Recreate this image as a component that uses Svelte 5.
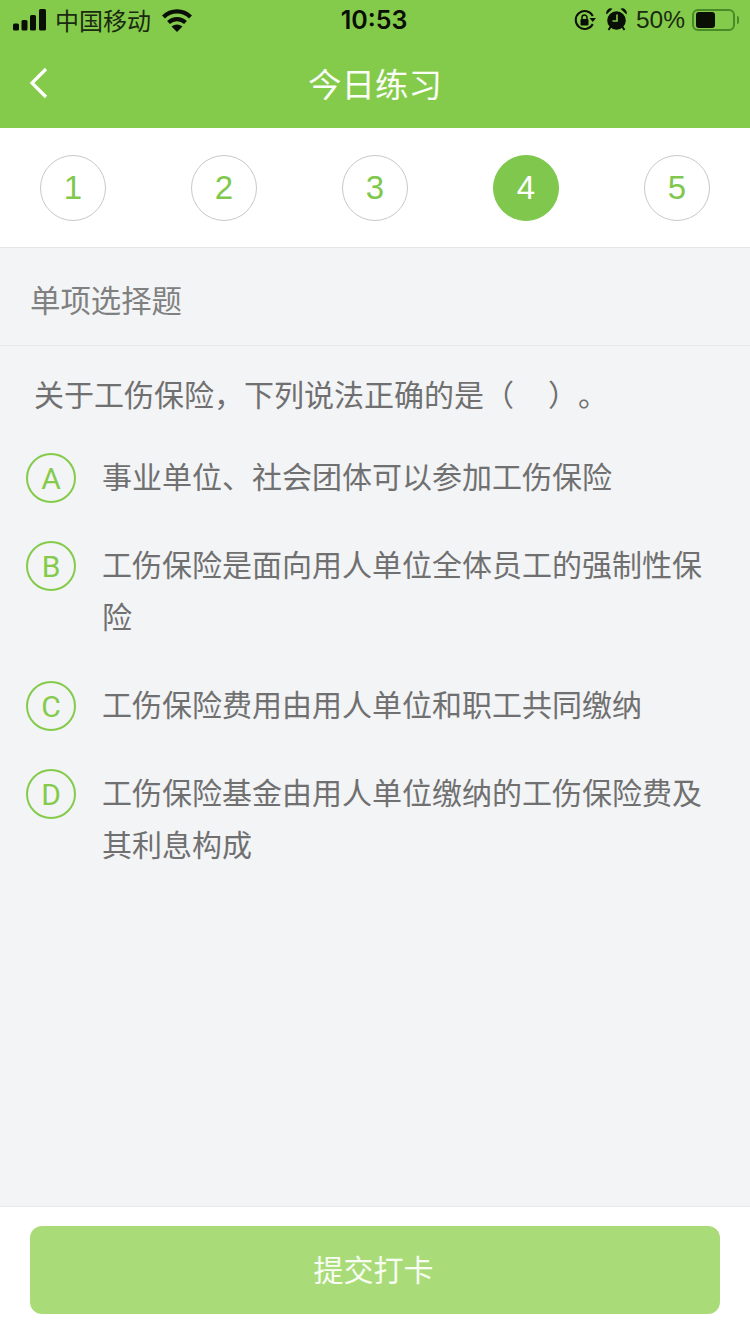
<script>
  const steps = [1, 2, 3, 4, 5];
  const options = [
    { key: 'A', text: '事业单位、社会团体可以参加工伤保险' },
    { key: 'B', text: '工伤保险是面向用人单位全体员工的强制性保险' },
    { key: 'C', text: '工伤保险费用由用人单位和职工共同缴纳' },
    { key: 'D', text: '工伤保险基金由用人单位缴纳的工伤保险费及其利息构成' }
  ];
</script>

<div class="page">
  <header class="header">
    <div class="status">
      <div class="st-left">
        <svg class="signal" width="33" height="22" viewBox="0 0 33 22">
          <rect x="0" y="14.500" width="6" height="7" rx="1.500" fill="#0a0f05"/>
          <rect x="8.500" y="11" width="6" height="10.500" rx="1.500" fill="#0a0f05"/>
          <rect x="17" y="6" width="6" height="15.500" rx="1.500" fill="#0a0f05"/>
          <rect x="26" y="0" width="7" height="21.500" rx="1.500" fill="#0a0f05"/>
        </svg>
        <span class="carrier">中国移动</span>
        <svg class="wifi" width="30" height="23" viewBox="0 0 30 23">
          <path d="M1.500 8C9 .5 21 .5 28.500 8" fill="none" stroke="#0a0f05" stroke-width="4.200"/>
          <path d="M6.500 13.500c5-4.500 12-4.500 17 0" fill="none" stroke="#0a0f05" stroke-width="4.200"/>
          <path d="M9.500 17.500c3.500-2.700 7.500-2.700 11 0L15 23z" fill="#0a0f05"/>
        </svg>
      </div>
      <span class="time">10:53</span>
      <div class="st-right">
        <svg width="22" height="22" viewBox="0 0 22 22">
          <path d="M18.800 15A9 9 0 1 1 18.800 7" fill="none" stroke="#0a0f05" stroke-width="2"/>
          <path d="M15.500 9h6.500l-3.200 4z" fill="#0a0f05"/>
          <rect x="6.500" y="10" width="8" height="6.500" rx="1" fill="#0a0f05"/>
          <path d="M8 10V8.500a2.500 2.500 0 0 1 5 0V10" fill="none" stroke="#0a0f05" stroke-width="1.500"/>
        </svg>
        <svg class="alarm" width="21" height="24" viewBox="0 0 21 24">
          <circle cx="10.500" cy="13.500" r="9.300" fill="#0a0f05"/>
          <path d="M.5 7.500A4.500 4.500 0 0 1 6.500 1.800zM20.500 7.500A4.500 4.500 0 0 0 14.500 1.800z" fill="#0a0f05"/>
          <path d="M4.500 20l-2 3M16.500 20l2 3" stroke="#0a0f05" stroke-width="2"/>
          <path d="M11 7.500v6.500H6.500" fill="none" stroke="#85cb4b" stroke-width="1.600"/>
        </svg>
        <span class="pct">50%</span>
        <div class="battery"><div class="fill"></div></div>
        <div class="nub"></div>
      </div>
    </div>
    <div class="nav">
      <svg class="back" width="20" height="32" viewBox="0 0 20 32">
        <path d="M17 2 3 16l14 14" fill="none" stroke="#fff" stroke-width="3.200"/>
      </svg>
      <h1 class="title">今日练习</h1>
    </div>
  </header>

  <nav class="steps">
    {#each steps as n}
      <div class="step" class:active={n === 4}>{n}</div>
    {/each}
  </nav>

  <div class="kind">单项选择题</div>

  <main class="body">
    <p class="question">关于工伤保险，下列说法正确的是（ &nbsp; ）。</p>
    {#each options as o}
      <div class="option">
        <span class="letter">{o.key}</span>
        <span class="text">{o.text}</span>
      </div>
    {/each}
  </main>

  <footer class="footer">
    <button class="submit">提交打卡</button>
  </footer>
</div>

<style>
  :global(body) {
    margin: 0;
  }
  .page {
    width: 750px;
    height: 1334px;
    display: flex;
    flex-direction: column;
    background: #f3f4f6;
    font-family: "Liberation Sans", "Noto Sans CJK SC", sans-serif;
    text-spacing-trim: space-all;
    overflow: hidden;
  }
  .header {
    height: 128px;
    background: #85cb4b;
    flex: none;
  }
  .status {
    height: 40px;
    display: flex;
    align-items: center;
    justify-content: space-between;
    position: relative;
    color: #0a0f05;
  }
  .st-left {
    display: flex;
    align-items: center;
    padding-left: 13px;
  }
  .carrier {
    font-size: 24px;
    margin-left: 9px;
    margin-top: -2px;
    color: #1a2a10;
  }
  .wifi {
    margin-left: 11px;
    margin-top: 1px;
  }
  .time {
    position: absolute;
    left: 0;
    right: 2px;
    top: 5px;
    text-align: center;
    font-size: 25px;
    font-family: Inter, "Liberation Sans", sans-serif;
    font-weight: 600;
  }
  .st-right {
    display: flex;
    align-items: center;
    padding-right: 11px;
  }
  .alarm {
    margin-left: 10px;
    margin-top: -2px;
  }
  .pct {
    font-size: 24.500px;
    margin-left: 9px;
    color: #1a2a10;
  }
  .battery {
    width: 43px;
    height: 22px;
    box-sizing: border-box;
    border: 2px solid #4a8a28;
    border-radius: 6px;
    margin-left: 7px;
    padding: 1px 2px;
  }
  .fill {
    width: 19px;
    height: 16px;
    background: #0a0f05;
    border-radius: 3px;
  }
  .nub {
    width: 2px;
    height: 8px;
    margin-left: 2px;
    background: #4a8a28;
    border-radius: 0 2px 2px 0;
  }
  .nav {
    height: 88px;
    position: relative;
    display: flex;
    align-items: center;
    justify-content: center;
    margin-top: -2px;
  }
  .back {
    position: absolute;
    left: 29px;
    top: 29px;
  }
  .title {
    margin: 0;
    font-size: 33.500px;
    font-weight: 400;
    color: #fbfdf8;
  }
  .steps {
    height: 120px;
    flex: none;
    box-sizing: border-box;
    background: #fff;
    border-bottom: 1px solid #e6e6e6;
    display: flex;
    align-items: center;
    justify-content: space-between;
    padding: 1px 40px 0;
  }
  .step {
    width: 66px;
    height: 66px;
    box-sizing: border-box;
    border: 1px solid #c9c9c9;
    border-radius: 50%;
    display: flex;
    align-items: center;
    justify-content: center;
    font-size: 33px;
    color: #7fc84d;
  }
  .step.active {
    background: #7fc84d;
    border-color: #7fc84d;
    color: #fff;
  }
  .kind {
    height: 98px;
    flex: none;
    box-sizing: border-box;
    border-bottom: 1px solid #e6e7e9;
    padding: 4px 0 0 30px;
    display: flex;
    align-items: center;
    font-size: 30.400px;
    color: #808080;
  }
  .body {
    flex: 1;
  }
  .question {
    margin: 0;
    padding: 24px 0 26px 34px;
    font-size: 30px;
    line-height: 52px;
    word-spacing: 3px;
    color: #707070;
  }
  .option {
    display: flex;
    align-items: flex-start;
    padding: 4px 40px 0 26px;
    margin-bottom: 32px;
  }
  .letter {
    flex: none;
    width: 50px;
    height: 50px;
    box-sizing: border-box;
    border: 2px solid #85cb4b;
    border-radius: 50%;
    display: flex;
    align-items: center;
    justify-content: center;
    font-family: Roboto, "Liberation Sans", sans-serif;
    font-size: 30px;
    color: #85cb4b;
    margin-top: 1px;
  }
  .text {
    margin-left: 26px;
    font-size: 30px;
    line-height: 52px;
    color: #707070;
    width: 610px;
  }
  .footer {
    height: 128px;
    flex: none;
    box-sizing: border-box;
    background: #fff;
    border-top: 1px solid #e8e9eb;
    padding: 19px 30px 20px;
  }
  .submit {
    display: block;
    width: 100%;
    height: 88px;
    border: 0;
    border-radius: 12px;
    background: #a9dc79;
    color: #f8fcf2;
    font: inherit;
    font-size: 30px;
    padding: 0 3px 4px 0;
  }
</style>
